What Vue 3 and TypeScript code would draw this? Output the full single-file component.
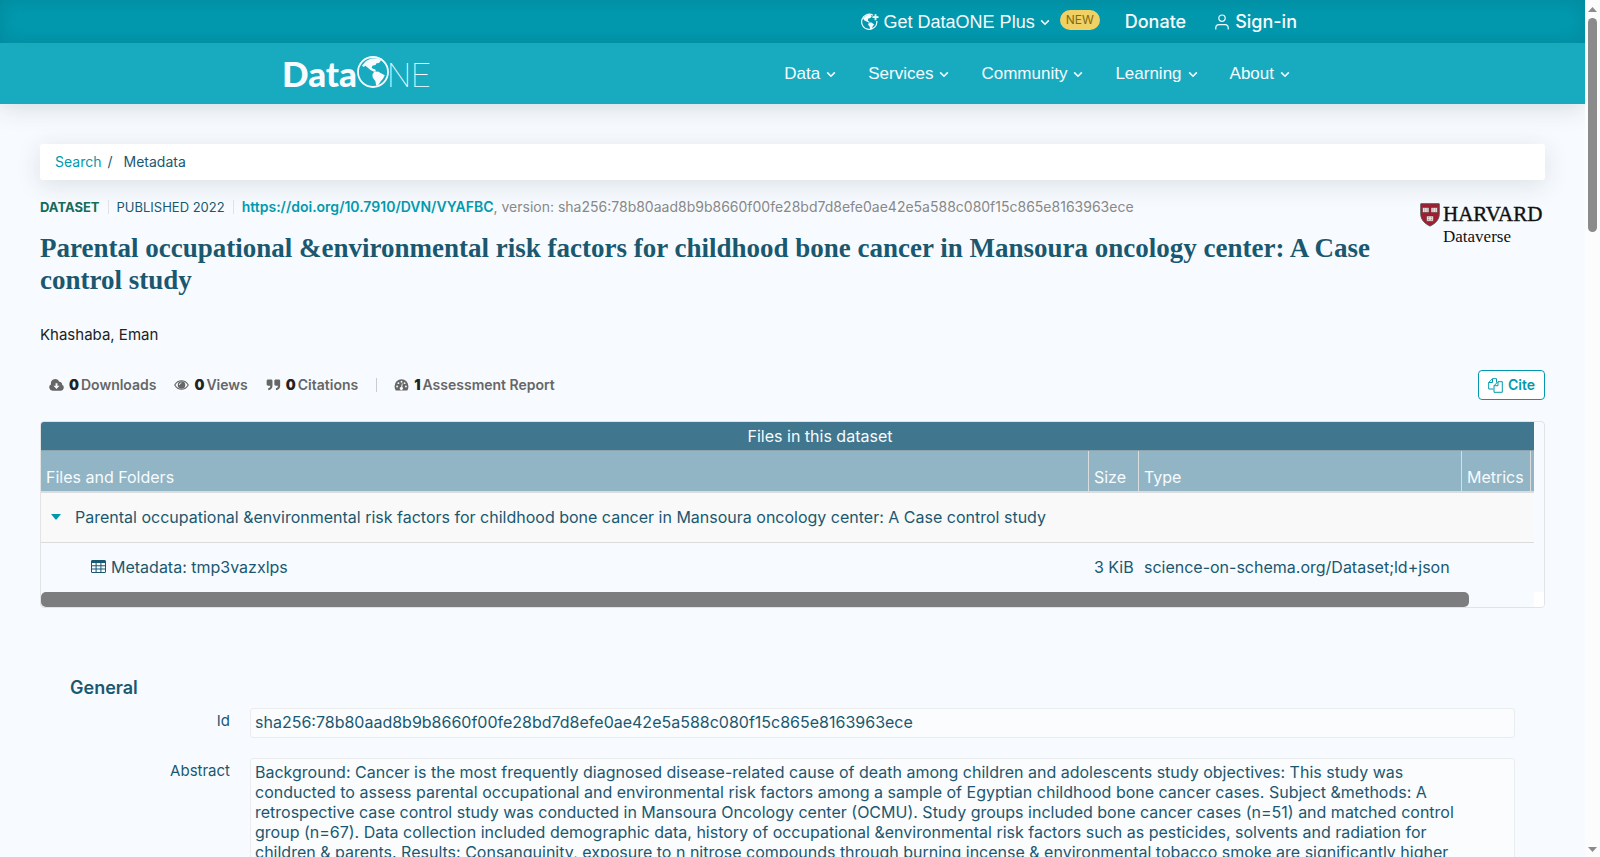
<script setup lang="ts">
interface NavItem { label: string }
interface Stat { icon: 'cloud' | 'eye' | 'quote' | 'gauge'; value: number; label: string }

const nav: NavItem[] = [
  { label: 'Data' },
  { label: 'Services' },
  { label: 'Community' },
  { label: 'Learning' },
  { label: 'About' },
]

const title =
  'Parental occupational &environmental risk factors for childhood bone cancer in Mansoura oncology center: A Case control study'

const hash = 'sha256:78b80aad8b9b8660f00fe28bd7d8efe0ae42e5a588c080f15c865e8163963ece'

const stats: Stat[] = [
  { icon: 'cloud', value: 0, label: 'Downloads' },
  { icon: 'eye', value: 0, label: 'Views' },
  { icon: 'quote', value: 0, label: 'Citations' },
  { icon: 'gauge', value: 1, label: 'Assessment Report' },
]

const abstractLines: string[] = [
  'Background: Cancer is the most frequently diagnosed disease-related cause of death among children and adolescents study objectives: This study was',
  'conducted to assess parental occupational and environmental risk factors among a sample of Egyptian childhood bone cancer cases. Subject &methods: A',
  'retrospective case control study was conducted in Mansoura Oncology center (OCMU). Study groups included bone cancer cases (n=51) and matched control',
  'group (n=67). Data collection included demographic data, history of occupational &environmental risk factors such as pesticides, solvents and radiation for',
  'children & parents. Results: Consanguinity, exposure to n nitrose compounds through burning incense & environmental tobacco smoke are significantly higher',
]
</script>

<template>
  <div class="window">
    <div class="page">
      <header class="header">
        <div class="topbar">
          <div class="inner top-inner">
            <button type="button" class="top-link plus">
              <svg class="globe-plus" viewBox="0 0 18 18" aria-hidden="true">
                <path d="M12 2.2A7.6 7.6 0 1 0 15.8 8" fill="none" stroke="currentColor" stroke-width="1.2" />
                <path d="M2 5.5 5 2.4 9 1.6l1.8 1.7-1.4 1.6-2 .6-.7 2 1.7 1.3-.6.8-2.3-1-2-1.2Z" fill="currentColor" />
                <path d="m7.8 9.4 2.7.2 2.6 2-1.5 2-.6 2.4-1.8.8-.5-3-1.6-2Z" fill="currentColor" />
                <path d="M14.5 1.2v6M11.5 4.2h6" stroke="currentColor" stroke-width="1.8" fill="none" />
              </svg>
              <span>Get DataONE Plus</span>
              <svg class="chev" viewBox="0 0 10 10" aria-hidden="true"><path d="m1.2 3.4 3.8 3.8 3.8-3.8" /></svg>
            </button>
            <span class="badge">NEW</span>
            <a class="top-link strong donate" href="#">Donate</a>
            <a class="top-link strong signin" href="#">
              <svg class="user" viewBox="0 0 14 16" aria-hidden="true">
                <circle cx="7" cy="4.2" r="3.2" />
                <path d="M.8 15.4v-1.6c0-2 1.4-3.2 3.2-3.2h6c1.800 0 3.200 1.200 3.200 3.200v1.600" />
              </svg>
              <span>Sign-in</span>
            </a>
          </div>
        </div>
        <div class="navbar">
          <div class="inner nav-inner">
            <a class="brand" href="#" aria-label="DataONE">
              <svg width="146" height="36" viewBox="0 0 146 36" aria-hidden="true">
                <text class="logo-data" x="-2" y="31">Data</text>
                <circle cx="89" cy="16" r="15" fill="none" stroke="#f7fbff" stroke-width="1.8" />
                <path d="M78 9.500 82 5l5-2.500 7-.2 3 2.200-2 2.500-2.500.3-1 1.800-3.200.7-.6 2 1.200 1 2.100.4 1.200 2.300-2.200.2-3.500-1.700-2.700-2.300-2.300-2-2 1.400Z" fill="#f7fbff" />
                <path d="m90 16 4-.5 3 1.700 3.800 2-1.800 3.500-2 2.300-2.600 4-2.200.8-.8-4.500-2.700-3.700-.3-3Z" fill="#f7fbff" />
                <text class="logo-one" x="103" y="31">NE</text>
              </svg>
            </a>
            <nav class="menu">
              <button v-for="n in nav" :key="n.label" type="button" class="menu-item">
                <span>{{ n.label }}</span>
                <svg class="chev" viewBox="0 0 10 10" aria-hidden="true"><path d="m1.2 3.4 3.8 3.8 3.8-3.8" /></svg>
              </button>
            </nav>
          </div>
        </div>
      </header>

      <main class="main">
        <nav class="crumbs"><a href="#">Search</a><span class="slash">/</span><span>Metadata</span></nav>

        <section class="intro">
          <div class="intro-text">
            <p class="meta">
              <span class="kind">DATASET</span>
              <span class="published">PUBLISHED 2022</span>
              <span class="ident"><a href="#">https://doi.org/10.7910/DVN/VYAFBC</a>, version: {{ hash }}</span>
            </p>
            <h1>{{ title }}</h1>
          </div>
          <a class="harvard" href="#" aria-label="Harvard Dataverse">
            <svg width="125" height="42" viewBox="0 0 125 42" aria-hidden="true">
              <path d="M.8.8h18.400v10.500c0 5.500-4.500 9.700-9.200 11.700C5.300 21 .8 16.800.8 11.300Z" fill="#a51c30" stroke="#4a4a4a" stroke-width="1" />
              <g fill="#f3e9e6" stroke="#5b3034" stroke-width=".6">
                <path d="M2.500 4.500h6.500v5H2.500ZM11 4.500h6.500v5H11ZM6.500 13h7v5.200h-7Z" />
              </g>
              <path d="M3.800 6h1.500M6.300 6h1.500M3.800 8h1.500M6.300 8h1.500M12.300 6h1.500M14.800 6h1.500M12.300 8h1.500M14.800 8h1.500M7.800 14.800h1.500M10.800 14.800h1.500M7.800 16.500h1.500M10.800 16.500h1.500" stroke="#7d7472" stroke-width=".8" />
              <text class="hv-big" x="23" y="18">HARVARD</text>
              <text class="hv-small" x="23" y="39">Dataverse</text>
            </svg>
          </a>
        </section>

        <p class="authors">Khashaba, Eman</p>

        <div class="toolbar">
          <ul class="stats">
            <li v-for="s in stats" :key="s.label" :class="{ last: s.icon === 'gauge' }">
              <svg v-if="s.icon === 'cloud'" class="ico" viewBox="0 0 16 14" aria-hidden="true">
                <path fill-rule="evenodd" d="M3.800 13A3.600 3.600 0 0 1 2.200 6.200 4.600 4.600 0 0 1 11 3.600a2.800 2.800 0 0 1 3 3.200A3.300 3.300 0 0 1 12.800 13ZM7 5.200v2.700H4.800L8 11.300l3.200-3.400H9V5.200Z" />
              </svg>
              <svg v-else-if="s.icon === 'eye'" class="ico" viewBox="0 0 16 14" aria-hidden="true">
                <path fill="none" stroke="currentColor" stroke-width="1.200" d="M.8 7C2.600 3.900 5.100 2.500 8 2.500S13.400 3.900 15.200 7C13.400 10.100 10.900 11.500 8 11.500S2.600 10.100.8 7Z" />
                <path d="M8 3a4 4 0 1 1 0 8 4 4 0 0 1 0-8Z" />
                <path d="M5.700 7A2.300 2.300 0 0 1 8 4.700" fill="none" stroke="#f7fbff" stroke-width=".9" />
              </svg>
              <svg v-else-if="s.icon === 'quote'" class="ico" viewBox="0 0 16 14" aria-hidden="true">
                <path d="M2.200 1h3.200c.9 0 1.500.6 1.500 1.500v5.300c0 2.800-1.600 4.500-4.500 4.700v-2.200c1.400-.1 2.100-.8 2.100-2.500H2.200C1.300 7.800.700 7.200.700 6.300V2.500C.700 1.600 1.300 1 2.200 1ZM10.400 1h3.200c.9 0 1.500.6 1.500 1.500v5.300c0 2.800-1.600 4.500-4.500 4.700v-2.200c1.400-.1 2.100-.8 2.100-2.500h-2.300c-.9 0-1.500-.6-1.500-1.500V2.500c0-.9.6-1.500 1.500-1.500Z" />
              </svg>
              <svg v-else class="ico" viewBox="0 0 16 14" aria-hidden="true">
                <path d="M8 .8a7.400 7.400 0 0 1 7.400 7.400c0 1.600-.4 3.200-1.200 4.600H1.800A8.500 8.500 0 0 1 .600 8.200 7.400 7.400 0 0 1 8 .8Z" />
                <g fill="#f7fbff">
                  <circle cx="3.300" cy="8.600" r="1" /><circle cx="4.700" cy="5" r="1" /><circle cx="8" cy="3.500" r="1" />
                  <circle cx="11.300" cy="5" r="1" /><circle cx="12.700" cy="8.600" r="1" />
                  <path d="m8.400 5.200.8.200-.4 3.800a1.700 1.700 0 1 1-1.200-.2Z" />
                </g>
              </svg>
              <strong>{{ s.value }}</strong><span>{{ s.label }}</span>
            </li>
          </ul>
          <button type="button" class="cite">
            <svg width="15" height="15" viewBox="0 0 15 15" aria-hidden="true">
              <path d="M5.500 11H.7V4.500L4.500.7h4v3.800M4.500.7v3.800H.7M10 3.700h4.300v10.600H6V7.700ZM10 3.700v4H6" />
            </svg>
            <span>Cite</span>
          </button>
        </div>

        <section class="files">
          <div class="files-view">
            <table>
              <colgroup><col /><col class="c-size" /><col class="c-type" /><col class="c-metrics" /><col class="c-end" /></colgroup>
              <thead>
                <tr class="t-title"><th colspan="5">Files in this dataset</th></tr>
                <tr class="t-head">
                  <th>Files and Folders</th><th>Size</th><th>Type</th><th>Metrics</th><th></th>
                </tr>
              </thead>
              <tbody>
                <tr class="t-folder">
                  <td colspan="5">
                    <span class="folder">
                      <svg width="10" height="6" viewBox="0 0 10 6" aria-hidden="true"><path d="M0 0h10L5.500 5.500h-1Z" fill="#0299ae" /></svg>
                      <span>{{ title }}</span>
                    </span>
                  </td>
                </tr>
                <tr class="t-file">
                  <td>
                    <span class="file">
                      <svg width="15" height="13" viewBox="0 0 15 13" aria-hidden="true">
                        <path fill-rule="evenodd" fill="#1a5870" d="M1.500 0h12c.9 0 1.500.6 1.500 1.500v10c0 .9-.6 1.500-1.500 1.500h-12C.6 13 0 12.400 0 11.500v-10C0 .6.600 0 1.500 0ZM1 3v2.300h3.600V3ZM5.600 3v2.300h3.800V3ZM10.400 3v2.300H14V3ZM1 6.300v2.200h3.600V6.300ZM5.600 6.300v2.200h3.800V6.300ZM10.400 6.300v2.200H14V6.300ZM1 9.500V12h3.600V9.500ZM5.600 9.500V12h3.800V9.500ZM10.400 9.500V12H14V9.500Z" />
                      </svg>
                      <span>Metadata: tmp3vazxlps</span>
                    </span>
                  </td>
                  <td>3 KiB</td>
                  <td>science-on-schema.org/Dataset;ld+json</td>
                  <td></td>
                  <td></td>
                </tr>
              </tbody>
            </table>
          </div>
          <div class="hscroll"><div class="hthumb"></div><div class="hcorner"></div></div>
        </section>

        <section class="general">
          <h2>General</h2>
          <dl>
            <dt>Id</dt>
            <dd>{{ hash }}</dd>
            <dt>Abstract</dt>
            <dd class="abstract"><div v-for="(l, i) in abstractLines" :key="i">{{ l }}</div></dd>
          </dl>
        </section>
      </main>
    </div>

    <div class="vscroll" aria-hidden="true">
      <svg width="9" height="5" viewBox="0 0 9 5"><path d="M0 5h9L4.500 0Z" fill="#8b8b8b" /></svg>
      <div class="vtrack"><div class="vthumb"></div></div>
      <svg width="9" height="5" viewBox="0 0 9 5"><path d="M0 0h9L4.500 5Z" fill="#8b8b8b" /></svg>
    </div>
  </div>
</template>

<style>
body { margin: 0; background: #f7fbff; }
</style>

<style scoped>
* { box-sizing: border-box; }
.window {
  display: flex;
  height: 100vh;
  overflow: hidden;
  font-family: Inter, "Noto Sans", sans-serif;
  font-size: 16px;
  line-height: 20px;
  color: #1a5870;
  background: #f7fbff;
}
.page { flex: 1; min-width: 0; overflow: hidden; }
a { color: #0299ae; text-decoration: none; }
button { font: inherit; background: none; border: 0; padding: 0; cursor: pointer; }

.header { box-shadow: 0 2px 24px rgba(40, 50, 60, 0.18); }
.inner { max-width: 1017px; height: 100%; margin: 0 auto; display: flex; align-items: center; }
.topbar { height: 43px; background: #0299ae; box-shadow: inset 0 0 20px rgba(0, 110, 130, 0.4); }
.top-inner { justify-content: flex-end; padding-right: 4px; }
.top-link { display: flex; align-items: center; color: #f7fbff; font-size: 18px; line-height: 20px; }
.plus { font-family: "Liberation Sans", Arial, sans-serif; gap: 5px; }
.globe-plus { width: 18px; height: 18px; }
.chev { width: 10px; height: 10px; fill: none; stroke: currentColor; stroke-width: 1.6; }
.badge {
  margin: 0 25px 4px 10px;
  padding: 0 6px;
  border-radius: 10px;
  background: #efd166;
  color: #84690f;
  font-size: 12px;
  line-height: 20px;
}
.strong { font-weight: 500; }
.donate { margin-right: 29px; }
.signin { gap: 6px; }
.user { width: 14px; height: 16px; fill: none; stroke: currentColor; stroke-width: 1.2; }

.navbar { height: 61px; background: #18abc0; }
.nav-inner { justify-content: space-between; }
.brand { display: block; height: 36px; }
.brand svg { display: block; overflow: visible; }
.logo-data { font-family: Lato, sans-serif; font-weight: 900; font-size: 35px; fill: #f7fbff; }
.logo-one { font-family: Roboto, sans-serif; font-weight: 100; font-size: 34px; fill: #f7fbff; }
.menu { display: flex; gap: 32px; padding-right: 11px; }
.menu-item {
  display: flex;
  align-items: center;
  gap: 6px;
  color: #f7fbff;
  font-family: "Liberation Sans", Arial, sans-serif;
  font-size: 17px;
  line-height: 20px;
}

.main { padding: 40px 40px 0; }
.crumbs {
  height: 36px;
  display: flex;
  align-items: center;
  padding: 0 15px;
  border-radius: 3px;
  background: #fff;
  font-size: 14px;
  box-shadow: 0 5px 24px rgba(40, 50, 60, 0.13);
}
.slash { margin: 0 11px 0 6px; }

.intro { display: flex; justify-content: space-between; margin-top: 17px; }
.intro-text { max-width: 1370px; }
.meta { margin: 0; display: flex; align-items: center; font-size: 13px; line-height: 20px; white-space: nowrap; }
.kind { font-weight: 700; color: #146b5c; }
.published, .ident { margin-left: 8px; padding-left: 8px; border-left: 1px solid #e0e2e4; line-height: 14px; }
.ident { color: #888; font-size: 14px; }
.ident a { font-weight: 600; }
h1 {
  margin: 15px 0 0;
  font-family: "Liberation Serif", "Times New Roman", serif;
  font-weight: 700;
  font-size: 27px;
  line-height: 32px;
}
.harvard { flex: none; margin-top: 6px; height: 42px; }
.harvard svg { display: block; overflow: visible; }
.hv-big, .hv-small { font-family: "Liberation Serif", serif; fill: #111; }
.hv-big { font-size: 21px; stroke: #111; stroke-width: 0.4px; }
.hv-small { font-size: 17px; }

.authors { margin: 29px 0 0; font-size: 15px; line-height: 20px; color: #222; }

.toolbar { margin-top: 25px; display: flex; justify-content: space-between; align-items: center; }
.stats { list-style: none; margin: 0; padding: 0 0 0 9px; display: flex; gap: 18px; font-size: 14px; font-weight: 600; color: #666; }
.stats li { display: flex; align-items: center; }
.stats strong { margin: 0 2px 0 5px; color: #222; }
.stats .last { border-left: 1px solid #ccc; padding-left: 17px; height: 14px; align-self: center; }
.ico { width: 15px; height: 14px; fill: currentColor; }
.cite {
  display: flex;
  align-items: center;
  gap: 5px;
  height: 30px;
  padding: 0 9px;
  border: 1px solid #0299ae;
  border-radius: 4px;
  background: #fff;
  color: #0299ae;
  font-size: 14px;
  font-weight: 600;
}
.cite svg { fill: none; stroke: #0299ae; stroke-width: 1; }

.files { margin-top: 21px; border: 1px solid #e1e3e5; border-radius: 4px; overflow: hidden; }
.files-view { margin-right: 10px; overflow: hidden; }
table { width: calc(100% + 65px); table-layout: fixed; border-collapse: separate; border-spacing: 0; }
.c-size { width: 50px; }
.c-type { width: 323px; }
.c-metrics { width: 69px; }
.c-end { width: 69px; }
th, td { padding: 0 5px; text-align: left; font-weight: 400; white-space: nowrap; }
th { color: #f7fbff; }
.t-title th { height: 29px; text-align: center; background: #41778e; border-bottom: 1px solid #8ba5b0; }
.t-head th { height: 42px; padding-bottom: 4px; vertical-align: bottom; background: #91b5c4; border-bottom: 2px solid #dadcde; }
.t-head th + th { border-left: 1px solid #dadcde; }
.t-folder td { height: 50px; background: #f9f9f9; border-bottom: 1px solid #dadcde; }
.t-file td { height: 49px; }
.t-folder td, .t-file td { padding-bottom: 2px; }
.t-file td + td { padding-left: 6px; padding-right: 0; }
.folder { display: flex; align-items: center; gap: 14px; padding-left: 5px; }
.file { display: flex; align-items: center; gap: 5px; padding-left: 45px; }
.hscroll { display: flex; justify-content: space-between; height: 15px; }
.hthumb { width: 95%; border-radius: 5px; background: #7c7d7e; }
.hcorner { width: 10px; background: #fff; }

.general { margin: 68px 30px 0; }
h2 { margin: 0; font-size: 18px; line-height: 24px; font-weight: 600; }
dl { margin: 8px 0 0; display: grid; grid-template-columns: 160px 1fr; column-gap: 20px; row-gap: 20px; }
dt { text-align: right; font-size: 15px; line-height: 20px; padding-top: 3px; }
dd {
  margin: 0;
  padding: 3px 4px 5px;
  border: 1px solid #ebecee;
  border-radius: 3px;
  background: #fbfcfe;
  white-space: nowrap;
}
.abstract { padding-bottom: 20px; }

.vscroll {
  width: 15px;
  flex: none;
  display: flex;
  flex-direction: column;
  align-items: center;
  padding: 7px 0 5px;
  background: #fcfcfc;
}
.vtrack { flex: 1; width: 9px; margin: 6px 0; }
.vthumb { height: 26%; border-radius: 5px; background: #8b8b8b; }
</style>
